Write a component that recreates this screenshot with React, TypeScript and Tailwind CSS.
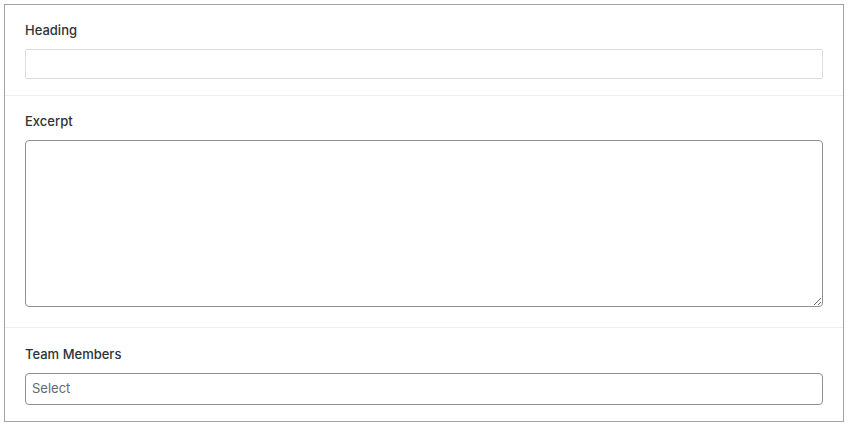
import React from "react";

export default function App() {
  return (
    <div className="w-[850px] h-[430px] bg-white pt-[4px] pl-[4px]" style={{ fontFamily: "Inter, 'Noto Sans', 'Liberation Sans', sans-serif" }}>
      <div className="w-[840px] border border-[#a2a2a2] bg-white">
        <div className="px-[20px] pt-[16px] pb-[16px] border-b border-[#eeeeee]">
          <div className="text-[13px] leading-[18px] font-medium text-[#2c3338] mb-[10px]">Heading</div>
          <input type="text" className="block w-full h-[30px] border border-[#dcdcde] rounded-[2px] px-[8px] text-[13px] outline-none" />
        </div>
        <div className="px-[20px] pt-[16px] pb-[20px] border-b border-[#eeeeee]">
          <div className="text-[13px] leading-[18px] font-medium text-[#2c3338] mb-[10px]">Excerpt</div>
          <textarea className="block w-full h-[167px] border border-[#8c8f94] rounded-[4px] px-[8px] py-[6px] text-[13px] outline-none resize-y" />
        </div>
        <div className="px-[20px] pt-[17px] pb-[16px]">
          <div className="text-[13px] leading-[18px] font-medium text-[#2c3338] mb-[10px]">Team Members</div>
          <div className="h-[32px] border border-[#8c8f94] rounded-[4px] pl-[6px] flex items-center text-[13px] text-[#646970]">Select</div>
        </div>
      </div>
    </div>
  );
}
